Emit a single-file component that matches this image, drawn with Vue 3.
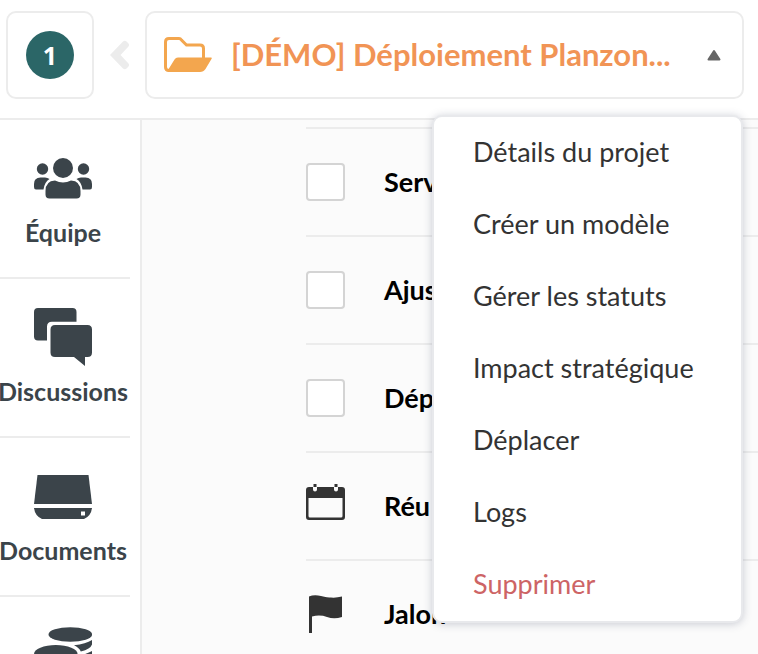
<template>
    <div class="project-page">
        <header class="topbar">
            <button type="button" class="topbar-workspace" aria-label="Espace 1">
                <span class="topbar-badge">1</span>
            </button>
            <button type="button" class="topbar-back" aria-label="Retour">
                <svg width="19" height="30" viewBox="0 0 19 30">
                    <path d="M0 15L13 1.500Q15 0 16.500 1.500L18.500 3.500Q19.500 5 18.500 6.500L10.500 15L18.500 23.500Q19.500 25 18.500 26.500L16.500 28.500Q15 30 13 28.500Z" />
                </svg>
            </button>
            <button
                type="button"
                class="topbar-project"
                aria-haspopup="menu"
                :aria-expanded="menuOpen"
                @click="menuOpen = !menuOpen"
            >
                <svg class="topbar-folder" width="48" height="36" viewBox="0 0 48 36">
                    <path
                        class="topbar-folder-back"
                        d="M39.500 21V11.500Q39.500 8 36 8H22.500L17.500 3Q16.500 1.500 15 1.500H5Q1.500 1.500 1.500 5V30Q1.500 33.500 5 33.500H36"
                    />
                    <path
                        class="topbar-folder-front"
                        d="M14 20.500H47Q48.300 20.500 47.600 21.700L41.500 32Q39.500 35 36 35H5Q3 35 4 33L10.500 22.500Q11.700 20.500 14 20.500Z"
                    />
                </svg>
                <span class="topbar-title">{{ title }}</span>
                <svg class="topbar-caret" width="14" height="12" viewBox="0 0 14 12">
                    <path d="M7 2L12.500 10.500H1.500Z" />
                </svg>
            </button>

            <ul v-if="menuOpen" class="menu" role="menu">
                <li v-for="entry in menuEntries" :key="entry.label" role="none">
                    <button
                        type="button"
                        role="menuitem"
                        class="menu-item"
                        :class="{ 'menu-item-danger': entry.danger }"
                        @click="menuOpen = false"
                    >
                        {{ entry.label }}
                    </button>
                </li>
            </ul>
        </header>

        <div class="content">
            <nav class="sidebar">
                <a href="#equipe" class="sidebar-item">
                    <svg width="58" height="58" viewBox="0 0 58 58">
                        <circle cx="8.500" cy="20" r="5.700" />
                        <circle cx="49.500" cy="20" r="5.700" />
                        <circle cx="29" cy="19" r="10" />
                        <path d="M0 38V35Q0 28.500 6.500 28.500H11Q13.500 28.500 15.500 30Q10.500 33 9.500 40.500H2Q0 40.500 0 38Z" />
                        <path d="M58 38V35Q58 28.500 51.500 28.500H47Q44.500 28.500 42.500 30Q47.500 33 48.500 40.500H56Q58 40.500 58 38Z" />
                        <path d="M11.500 45.500V42Q11.500 32 21 31.500Q25 33.500 29 33.500T37 31.500Q46.500 32 46.500 42V45.500Q46.500 49.500 42.500 49.500H15.500Q11.500 49.500 11.500 45.500Z" />
                    </svg>
                    <span class="sidebar-label">Équipe</span>
                </a>
                <a href="#discussions" class="sidebar-item">
                    <svg width="58" height="58" viewBox="0 0 58 58">
                        <path d="M4 0H38.500Q42.500 0 42.500 4V13.700H18Q13 13.700 13 18.500V32.500H4Q0 32.500 0 28.500V4Q0 0 4 0Z" />
                        <path d="M21 17H53.500Q58 17 58 21.500V44.500Q58 49 53.500 49H51V58L40 49H21Q16.500 49 16.500 44.500V21.500Q16.500 17 21 17Z" />
                    </svg>
                    <span class="sidebar-label">Discussions</span>
                </a>
                <a href="#documents" class="sidebar-item">
                    <svg width="58" height="58" viewBox="0 0 58 58">
                        <path d="M3.500 8H54.500L58 37H0Z" />
                        <path
                            fill-rule="evenodd"
                            d="M0 41H58Q57 49 50 52H8Q1 49 0 41ZM47 44.500V48.500H51V44.500Z"
                        />
                    </svg>
                    <span class="sidebar-label">Documents</span>
                </a>
                <a href="#budget" class="sidebar-item">
                    <svg width="58" height="58" viewBox="0 0 58 58">
                        <ellipse cx="36.300" cy="8.500" rx="21.800" ry="7.300" />
                        <path d="M40 19.300Q52 18 58 14V18.500Q56.500 23 46.800 25.500Q45 21.500 40 19.300Z" />
                        <path d="M47.500 29Q54 27.500 58 25V30Q56.500 33.500 47.500 36Z" />
                        <ellipse cx="21.800" cy="28" rx="21.800" ry="9" />
                        <path d="M0 35Q8 41 21.800 41T43.500 35V41Q40 48 21.800 48T0 41Z" />
                        <path d="M0 46.500Q8 51.500 21.800 51.500T43.500 46.500V51Q40 58 21.800 58T0 51Z" />
                    </svg>
                </a>
            </nav>

            <main class="tasks">
                <ul class="tasks-list">
                    <li v-for="task in tasks" :key="task.id" class="task">
                        <input
                            v-if="task.type === 'task'"
                            :id="task.id"
                            v-model="task.done"
                            type="checkbox"
                            class="task-check"
                        />
                        <svg
                            v-else-if="task.type === 'meeting'"
                            class="task-icon"
                            width="39"
                            height="44"
                            viewBox="0 0 39 44"
                        >
                            <path
                                fill-rule="evenodd"
                                d="M3 3H7V5.500A2 2 0 0 0 11 5.500V3H28V5.500A2 2 0 0 0 32 5.500V3H36Q39 3 39 6V33Q39 36 36 36H3Q0 36 0 33V6Q0 3 3 3ZM2.500 14V32Q2.500 33.500 4 33.500H35Q36.500 33.500 36.500 32V14Z"
                            />
                            <path d="M7.500 0H10.500V3H7.500ZM28.500 0H31.500V3H28.500Z" />
                        </svg>
                        <svg v-else class="task-icon" width="39" height="38" viewBox="0 0 39 38">
                            <path d="M3 1.500Q8-.5 15 1T25 2.500Q30 3 36 1.500V22Q28 24.500 21 22T6 21.500V38H3Z" />
                        </svg>
                        <component
                            :is="task.type === 'task' ? 'label' : 'span'"
                            class="task-name"
                            :for="task.type === 'task' ? task.id : undefined"
                        >{{ task.name }}</component>
                    </li>
                </ul>
            </main>
        </div>
    </div>
</template>

<script setup>
import { ref } from "vue";

const title = "[DÉMO] Déploiement Planzon...";
const menuOpen = ref(true);

const menuEntries = [
    { label: "Détails du projet" },
    { label: "Créer un modèle" },
    { label: "Gérer les statuts" },
    { label: "Impact stratégique" },
    { label: "Déplacer" },
    { label: "Logs" },
    { label: "Supprimer", danger: true },
];

const tasks = ref([
    { id: "task-1", type: "task", name: "Serv", done: false },
    { id: "task-2", type: "task", name: "Ajus", done: false },
    { id: "task-3", type: "task", name: "Dép", done: false },
    { id: "task-4", type: "meeting", name: "Réu" },
    { id: "task-5", type: "milestone", name: "Jalon" },
]);
</script>

<style>
body {
    overflow: hidden;
    background-color: #fff;
}
</style>

<style scoped>
.project-page {
    height: 100vh;
    overflow: hidden;
    display: flex;
    flex-direction: column;
    font-family: Lato, "Liberation Sans", sans-serif;
    color: #333;
}

.project-page * {
    box-sizing: border-box;
}

button {
    font: inherit;
    color: inherit;
    padding: 0;
    border: none;
    background: none;
    cursor: pointer;
}

ul {
    list-style: none;
    margin: 0;
    padding: 0;
}

svg {
    display: block;
    flex: none;
}

.topbar {
    position: relative;
    z-index: 1;
    flex: none;
    display: flex;
    align-items: center;
    gap: 16px;
    padding: 11px 14px 19px 6px;
    border-bottom: 2px solid #ececec;
    background-color: #fff;
}

.topbar-workspace,
.topbar-project {
    height: 88px;
    border: 2px solid #ececec;
    border-radius: 10px;
    display: flex;
    align-items: center;
}

.topbar-workspace {
    flex: none;
    width: 88px;
    justify-content: center;
}

.topbar-badge {
    width: 48px;
    height: 48px;
    border-radius: 50%;
    background-color: #2b6667;
    color: #fff;
    font-family: "Open Sans", sans-serif;
    font-size: 25px;
    font-weight: 700;
    line-height: 48px;
}

.topbar-back path {
    fill: #ececec;
}

.topbar-project {
    flex: 1;
    min-width: 0;
    padding: 0 21px 0 17px;
}

.topbar-folder-back {
    fill: none;
    stroke: #f3a64e;
    stroke-width: 3;
}

.topbar-folder-front {
    fill: #f3a64e;
}

.topbar-title {
    flex: 1;
    min-width: 0;
    margin-left: 19px;
    padding-bottom: 2px;
    overflow: hidden;
    white-space: nowrap;
    text-align: left;
    font-size: 31px;
    font-weight: 700;
    line-height: 40px;
    color: #f19455;
}

.topbar-caret path {
    fill: #666;
    stroke: #666;
    stroke-width: 2;
    stroke-linejoin: round;
}

.menu {
    position: absolute;
    top: 115px;
    right: 15px;
    width: 311px;
    border: 2px solid #e8e9ec;
    border-radius: 10px;
    background-color: #fff;
    box-shadow: 0 1px 8px rgba(50, 60, 90, 0.25);
}

.menu-item {
    display: block;
    width: 100%;
    height: 72px;
    padding: 0 39px 3px;
    text-align: left;
    font-size: 27px;
    white-space: nowrap;
}

.menu-item-danger {
    color: #cd6465;
}

.content {
    flex: 1;
    min-height: 0;
    display: flex;
}

.sidebar {
    flex: none;
    width: 142px;
    overflow: hidden;
    border-right: 2px solid #ececec;
    background-color: #fff;
}

.sidebar-item {
    display: flex;
    flex-direction: column;
    align-items: center;
    gap: 10px;
    margin: 0 10px 0 -4px;
    padding: 29px 0 30px;
    border-bottom: 2px solid #ececec;
    color: #3b444a;
    text-decoration: none;
}

.sidebar-item svg {
    fill: #3b444a;
}

.sidebar-label {
    font-size: 25px;
    font-weight: 700;
    line-height: 30px;
}

.tasks {
    flex: 1;
    min-width: 0;
    padding: 7px 0 0 164px;
    background-color: #fbfbfb;
}

.task {
    display: flex;
    align-items: center;
    gap: 39px;
    height: 108px;
    border-top: 2px solid #ececec;
}

.task-check {
    appearance: none;
    flex: none;
    width: 39px;
    height: 38px;
    margin: 0;
    border: 2px solid #d4d4d4;
    border-radius: 4px;
    background-color: #fff;
}

.task-check:checked {
    background-color: #2b6667;
}

.task-icon {
    fill: #333;
}

.task-name {
    padding-bottom: 2px;
    color: #000;
    font-size: 27px;
    font-weight: 700;
}
</style>
